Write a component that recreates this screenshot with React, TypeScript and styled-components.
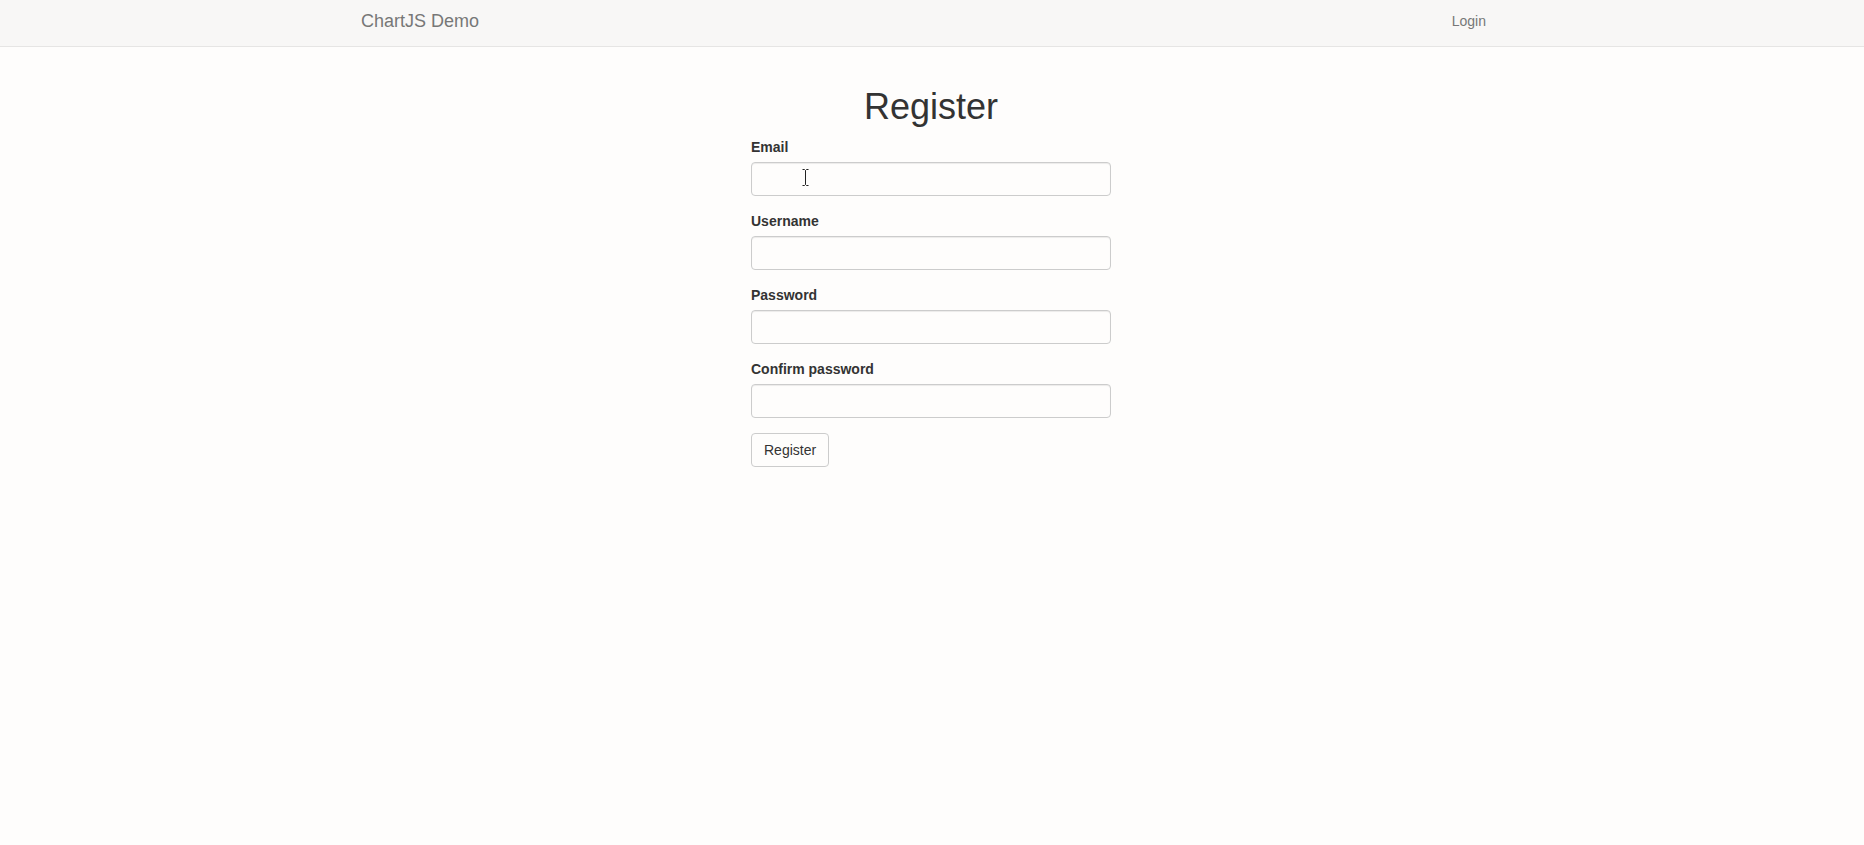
import styled, { createGlobalStyle } from 'styled-components'

const GlobalStyle = createGlobalStyle`
  * { box-sizing: border-box; }
  html, body {
    margin: 0;
    padding: 0;
    background: #fefdfc;
    font-family: "Liberation Sans", Arial, sans-serif;
    font-size: 14px;
    line-height: 1.42857;
    color: #333;
  }
`

const Navbar = styled.nav`
  height: 47px;
  background: #f8f7f6;
  border-bottom: 1px solid #e6e5e4;
`

const NavContainer = styled.div`
  width: 1170px;
  margin: 0 auto;
  padding: 0 14px;
  height: 100%;
  display: flex;
  align-items: center;
  justify-content: space-between;
`

const Brand = styled.a`
  font-size: 18px;
  color: #777;
  text-decoration: none;
  line-height: 20px;
  margin-top: -4px;
`

const NavLink = styled.a`
  font-size: 14px;
  color: #777;
  text-decoration: none;
  margin-right: 17px;
  margin-top: -3px;
`

const Main = styled.main`
  width: 1170px;
  margin: 0 auto;
  padding: 0 15px;
  display: flex;
  justify-content: center;
`

const FormColumn = styled.div`
  width: 360px;
  margin-right: 2px;
`

const Title = styled.h1`
  font-size: 36px;
  font-weight: 500;
  line-height: 1.1;
  text-align: center;
  margin: 40px 0 10px;
  color: #333;
`

const FormGroup = styled.div`
  margin-bottom: 15px;
  position: relative;
`

const Label = styled.label`
  display: block;
  font-weight: bold;
  margin-bottom: 5px;
  line-height: 20px;
`

const Input = styled.input`
  display: block;
  width: 100%;
  height: 34px;
  padding: 6px 12px;
  font-size: 14px;
  font-family: inherit;
  background: #fefdfc;
  border: 1px solid #ccc;
  border-radius: 4px;
  box-shadow: inset 0 1px 1px rgba(0, 0, 0, 0.075);
  outline: none;
`

const Button = styled.button`
  height: 34px;
  padding: 6px 12px;
  font-size: 14px;
  font-family: inherit;
  color: #333;
  background: #fefdfc;
  border: 1px solid #ccc;
  border-radius: 4px;
  cursor: pointer;
`

const Cursor = styled.svg`
  position: absolute;
  left: 51px;
  top: 32px;
  pointer-events: none;
`

const fields = [
  { id: 'email', label: 'Email', type: 'email' },
  { id: 'username', label: 'Username', type: 'text' },
  { id: 'password', label: 'Password', type: 'password' },
  { id: 'confirm', label: 'Confirm password', type: 'password' },
]

export default function App() {
  return (
    <>
      <GlobalStyle />
      <Navbar>
        <NavContainer>
          <Brand href="#">ChartJS Demo</Brand>
          <NavLink href="#">Login</NavLink>
        </NavContainer>
      </Navbar>
      <Main>
        <FormColumn>
          <Title>Register</Title>
          <form onSubmit={e => e.preventDefault()}>
            {fields.map((f, i) => (
              <FormGroup key={f.id}>
                <Label htmlFor={f.id}>{f.label}</Label>
                <Input id={f.id} type={f.type} />
                {i === 0 && (
                  <Cursor width="7" height="17" viewBox="0 0 7 17">
                    <path d="M0.5 0.5h2l1 1 1-1h2M3.5 1.5v14M0.5 16.5h2l1-1 1 1h2" stroke="#222" strokeWidth="1" fill="none" />
                  </Cursor>
                )}
              </FormGroup>
            ))}
            <Button type="submit">Register</Button>
          </form>
        </FormColumn>
      </Main>
    </>
  )
}
